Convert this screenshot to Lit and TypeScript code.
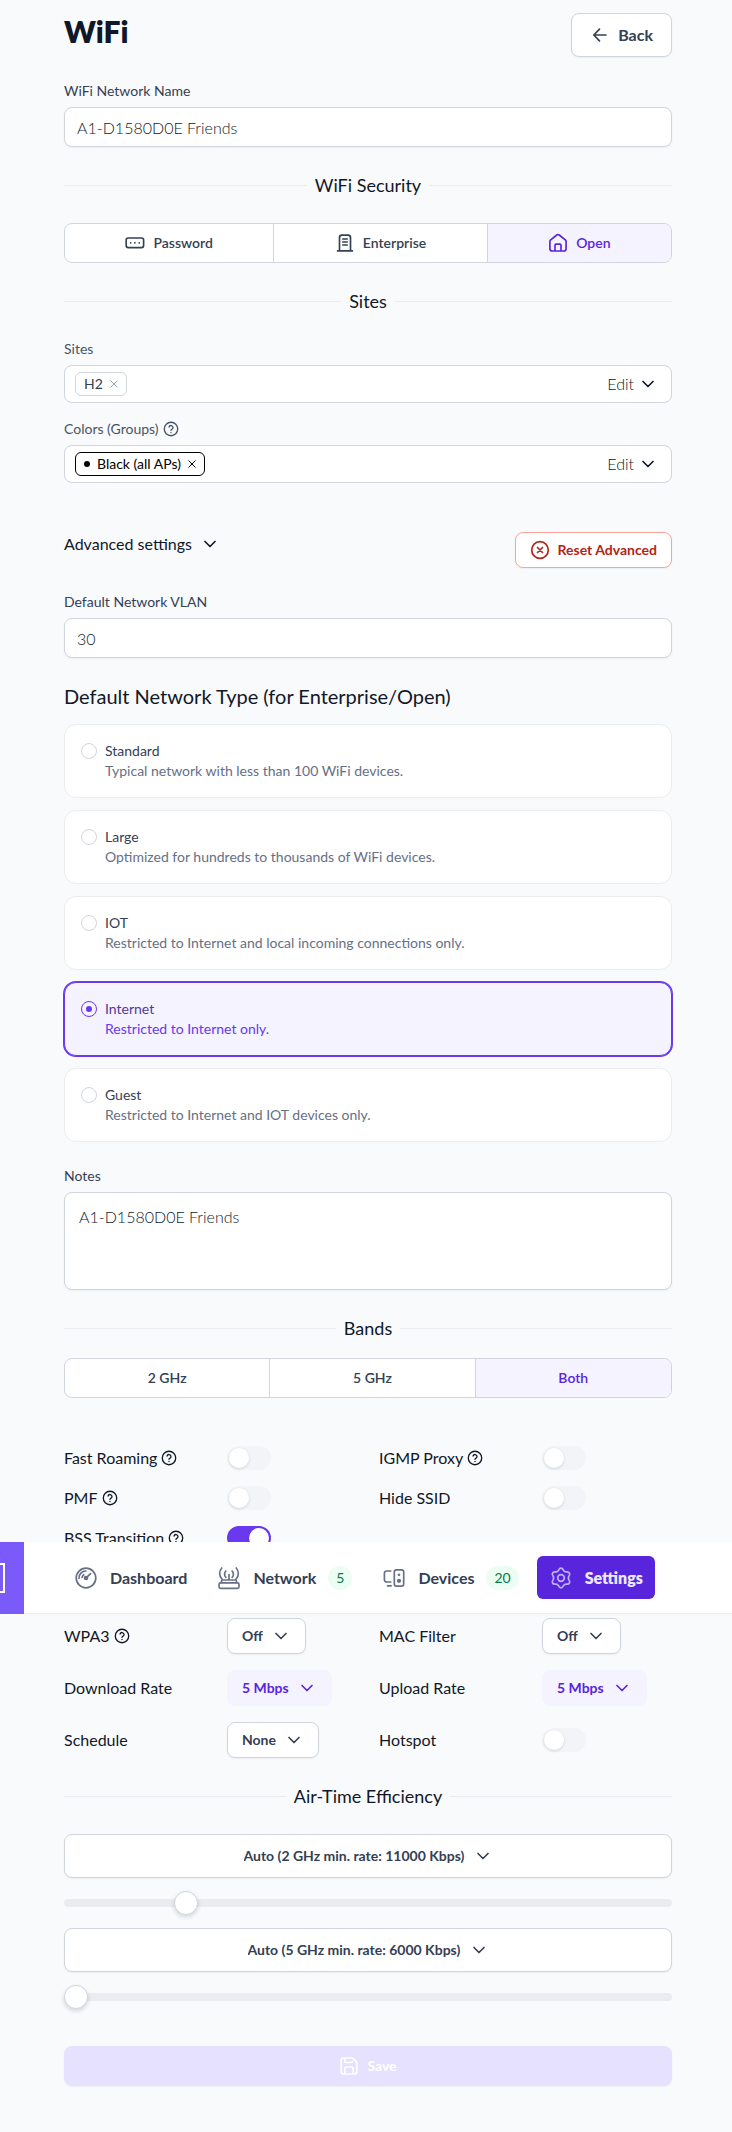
import { LitElement, html, css, svg, nothing } from "lit";
import type { TemplateResult, SVGTemplateResult } from "lit";
import { customElement, state } from "lit/decorators.js";
import { classMap } from "lit/directives/class-map.js";

type Icon = { box: string; art: SVGTemplateResult };

const icons: Record<string, Icon> = {
  back: { box: "0 0 20 20", art: svg`<path d="M16 10H4M9.5 4.2 3.8 10l5.700 5.800"/>` },
  chevron: { box: "0 0 20 20", art: svg`<path d="m5 7.5 5 5 5-5"/>` },
  help: {
    box: "0 0 20 20",
    art: svg`<circle cx="10" cy="10" r="8.4"/><path d="M7.6 7.5a2.5 2.5 0 0 1 4.9.8c0 1.7-2.5 2.2-2.5 3.4M10 14.3v.1"/>`,
  },
  close: { box: "0 0 8 8", art: svg`<path d="m.8.8 6.400 6.400m0-6.400-6.400 6.400"/>` },
  reset: { box: "0 0 20 20", art: svg`<circle cx="10" cy="10" r="8.3"/><path d="m7.5 7.5 5 5m0-5-5 5"/>` },
  password: {
    box: "0 0 20 20",
    art: svg`<rect x="1.2" y="5" width="17.4" height="9.6" rx="2"/><path d="M5.6 9.8h.1M9.9 9.8h.1M14.2 9.8h.1"/>`,
  },
  enterprise: {
    box: "0 0 20 20",
    art: svg`<path d="M4.5 17.6V4.6a2.4 2.4 0 0 1 2.4-2.4h6.2a2.4 2.4 0 0 1 2.4 2.4v13M2.6 17.9h14.8M7.8 6h4.4M7.8 9h4.4M7.8 12h4.4"/>`,
  },
  home: {
    box: "0 0 20 20",
    art: svg`<path d="M1.9 8.6c0-.7.3-1.2.8-1.7L8.8 2a1.9 1.9 0 0 1 2.4 0l6.1 4.9c.5.5.8 1 .8 1.7v7.1a2.3 2.3 0 0 1-2.3 2.3H4.2a2.3 2.3 0 0 1-2.3-2.3ZM7 17.8v-5.6c0-.6.4-1 1-1h4c.6 0 1 .4 1 1v5.6"/>`,
  },
  save: {
    box: "0 0 20 20",
    art: svg`<path d="M5.8 2v3.6c0 .5.4.9.9.9h5.6c.5 0 .9-.4.9-.9M14.2 18v-6c0-.6-.4-1-1-1H6.8c-.6 0-1 .4-1 1v6M17.8 7.2v8.3a2.5 2.5 0 0 1-2.5 2.5H4.7a2.5 2.5 0 0 1-2.5-2.5v-11A2.5 2.5 0 0 1 4.7 2h7.9c.7 0 1.3.3 1.8.8l2.6 2.600c.5.5.8 1.1.8 1.8Z"/>`,
  },
  dashboard: {
    box: "0 0 24 24",
    art: svg`<circle cx="12" cy="12" r="9.8"/><path d="M5 12.4A7 7 0 0 1 12 5M8 11.4a4.2 4.2 0 0 1 1.8-2.7M12.4 11.6 16.6 7.6"/><circle cx="12" cy="12" r="1.5" fill="currentColor"/>`,
  },
  network: {
    box: "0 0 24 24",
    art: svg`<rect x="2" y="16.8" width="20" height="5.6" rx="1.6"/><path d="M4.2 16.5 5 14h14l.8 2.5M12 14V8.5M8.8 11.3c-1.6-1.6-1.6-4.6 0-6.2M15.2 11.3c1.6-1.6 1.6-4.6 0-6.2M5 13.2C1.9 10.2 1.9 5 4.8 2M19 13.2c3.1-3 3.1-8.2.2-11.2"/>`,
  },
  devices: {
    box: "0 0 24 24",
    art: svg`<path d="M8.8 5H4.6A2.2 2.2 0 0 0 2.4 7.2v6.6A2.2 2.2 0 0 0 4.6 16h4.2M5.500 19.8h3.6"/><rect x="12.3" y="3.8" width="9.4" height="16.4" rx="2.2"/><circle cx="17" cy="8.8" r=".5" fill="currentColor"/><circle cx="17" cy="14.8" r="1.3" fill="currentColor"/>`,
  },
  settings: {
    box: "0 0 24 24",
    art: svg`<circle cx="12" cy="12" r="3.3"/><path d="M12 2.2c1.7 0 1.9 1.1 2.5 2.2.6 1 1.6 1.6 2.8 1.5 1.3 0 2.3-.4 3.1 1.1.9 1.5.1 2.2-.6 3.3-.6 1-.6 2.3 0 3.4.7 1.1 1.5 1.8.6 3.3-.8 1.5-1.8 1.1-3.1 1.1-1.2-.1-2.2.5-2.8 1.5-.6 1.1-.8 2.2-2.5 2.2s-1.9-1.1-2.5-2.2c-.6-1-1.6-1.6-2.8-1.5-1.3 0-2.3.4-3.1-1.1-.9-1.5-.1-2.2.6-3.3.6-1.1.6-2.4 0-3.4-.7-1.1-1.5-1.8-.6-3.3.8-1.5 1.8-1.1 3.1-1.1 1.2.1 2.2-.5 2.8-1.5.6-1.1.8-2.2 2.5-2.2Z"/>`,
  },
};

const icon = (name: string, size = "") => html`
  <svg class="icon ${size}" viewBox=${icons[name].box} aria-hidden="true">${icons[name].art}</svg>
`;

const networkTypes = [
  ["Standard", "Typical network with less than 100 WiFi devices."],
  ["Large", "Optimized for hundreds to thousands of WiFi devices."],
  ["IOT", "Restricted to Internet and local incoming connections only."],
  ["Internet", "Restricted to Internet only."],
  ["Guest", "Restricted to Internet and IOT devices only."],
];

@customElement("app-root")
export class AppRoot extends LitElement {
  @state() private security = "Open";
  @state() private band = "Both";
  @state() private networkType = "Internet";

  static styles = css`
    :host {
      display: block;
      min-height: 100vh;
      box-sizing: border-box;
      background: #f9fafc;
      color: #101828;
      font-family: Lato, "Open Sans", sans-serif;
      font-size: 14px;
      line-height: 20px;
      overflow-x: hidden;
    }
    *,
    *::before {
      box-sizing: border-box;
    }
    h1,
    h2,
    h3 {
      margin: 0;
      font-weight: 400;
    }
    button,
    input,
    textarea,
    select {
      margin: 0;
      font: inherit;
      color: inherit;
    }
    button,
    select {
      padding: 0;
      border: 0;
      background: none;
      cursor: pointer;
    }
    .icon {
      flex: none;
      width: 20px;
      height: 20px;
      fill: none;
      stroke: currentColor;
      stroke-width: 1.67;
      stroke-linecap: round;
      stroke-linejoin: round;
    }
    .icon.s8 {
      width: 8px;
      height: 8px;
      stroke-width: 1;
    }
    .icon.s16 {
      width: 16px;
      height: 16px;
    }
    .icon.s24 {
      width: 24px;
      height: 24px;
      color: #667085;
    }
    .section {
      display: flex;
      flex-direction: column;
      gap: 24px;
      padding: 0 60px 0 64px;
    }
    .top {
      padding-top: 13px;
    }
    .bottom {
      padding-bottom: 46px;
    }
    .row {
      display: flex;
      align-items: flex-start;
      justify-content: space-between;
    }
    .advanced {
      margin-top: 25px;
    }
    h1 {
      font-size: 30px;
      line-height: 36px;
      font-weight: 800;
    }
    h3 {
      font-size: 20px;
      line-height: 28px;
    }
    .types {
      display: flex;
      flex-direction: column;
      gap: 12px;
      margin: 0;
      padding: 0;
      border: 0;
      min-width: 0;
    }
    .types-block {
      display: flex;
      flex-direction: column;
      gap: 14px;
    }
    .button {
      display: flex;
      align-items: center;
      justify-content: center;
      gap: 8px;
      height: 36px;
      padding: 0 14px;
      border: 1px solid #d0d5dd;
      border-radius: 8px;
      background: #fff;
      color: #344054;
      font-weight: 700;
      box-shadow: 0 1px 2px rgba(16, 24, 40, 0.05);
    }
    .button.large {
      height: 44px;
      padding: 0 18px;
      font-size: 16px;
    }
    .button.wide {
      height: 44px;
    }
    .button.danger {
      border-color: #fda29b;
      color: #b42318;
    }
    .button.tinted {
      border-color: #f4f3ff;
      background: #f4f3ff;
      color: #5925dc;
      box-shadow: none;
    }
    .button.save {
      height: 40px;
      margin-top: 24px;
      border-color: #e5e1fe;
      background: #e5e1fe;
      color: #fff;
    }
    .button select {
      appearance: none;
      height: 100%;
    }
    .disclosure {
      display: flex;
      align-items: center;
      gap: 8px;
      font-size: 16px;
      line-height: 24px;
    }
    .field {
      display: flex;
      flex-direction: column;
      gap: 6px;
    }
    .field .label {
      display: flex;
      align-items: center;
      gap: 4px;
      height: 20px;
      color: #344054;
    }
    .pickers {
      display: flex;
      flex-direction: column;
      gap: 16px;
    }
    .pickers .label {
      color: #475467;
    }
    .text {
      width: 100%;
      height: 40px;
      padding: 0 12px;
      border: 1px solid #d0d5dd;
      border-radius: 8px;
      background: #fff;
      font-size: 16px;
      font-weight: 300;
      box-shadow: 0 1px 2px rgba(16, 24, 40, 0.05);
    }
    textarea.text {
      display: block;
      height: 98px;
      padding: 12px 14px;
      line-height: 24px;
      resize: none;
    }
    .picker {
      display: flex;
      align-items: center;
      justify-content: space-between;
      height: 38px;
      padding: 0 13px 0 10px;
      border: 1px solid #d0d5dd;
      border-radius: 8px;
      background: #fff;
    }
    .edit {
      display: flex;
      align-items: center;
      gap: 4px;
      font-size: 16px;
      font-weight: 300;
    }
    .tag {
      display: flex;
      align-items: center;
      gap: 7px;
      height: 24px;
      padding: 0 8px;
      border: 1px solid #d0d5dd;
      border-radius: 6px;
      color: #344054;
    }
    .tag button {
      display: flex;
      color: #98a2b3;
    }
    .tag.black,
    .tag.black button {
      border-color: #000;
      color: #000;
    }
    .dot {
      width: 6px;
      height: 6px;
      border-radius: 50%;
      background: #000;
    }
    .divider {
      display: flex;
      align-items: center;
      gap: 8px;
      font-size: 18px;
      line-height: 28px;
    }
    .divider::before,
    .divider::after {
      content: "";
      flex: 1;
      height: 1px;
      background: #eaecf0;
    }
    .segments {
      display: flex;
      height: 40px;
      border: 1px solid #d0d5dd;
      border-radius: 8px;
      background: #fff;
      overflow: hidden;
    }
    .segments button {
      display: flex;
      flex: 1 1 auto;
      align-items: center;
      justify-content: center;
      gap: 8px;
      color: #344054;
      font-weight: 600;
    }
    .segments button + button {
      border-left: 1px solid #d0d5dd;
    }
    .segments .on {
      background: #f4f3ff;
      color: #5925dc;
    }
    .bands {
      display: flex;
      flex-direction: column;
      gap: 16px;
    }
    .card {
      display: flex;
      gap: 8px;
      height: 74px;
      padding: 16px;
      border: 1px solid #eaecf0;
      border-radius: 12px;
      background: #fff;
      color: #344054;
      cursor: pointer;
    }
    .card p {
      margin: 0;
      color: #667085;
    }
    .card.on {
      border-color: #6938ef;
      background: #f4f3ff;
      color: #53389e;
      box-shadow: 0 0 0 1px #6938ef;
    }
    .card.on p {
      color: #6938ef;
    }
    .radio {
      appearance: none;
      display: grid;
      place-content: center;
      flex: none;
      width: 16px;
      height: 16px;
      margin-top: 2px;
      border: 1px solid #d0d5dd;
      border-radius: 50%;
      background: #fff;
    }
    .radio:checked {
      border-color: #6938ef;
      background: #f4f3ff;
    }
    .radio:checked::before {
      content: "";
      width: 6px;
      height: 6px;
      border-radius: 50%;
      background: #6938ef;
    }
    .options {
      display: grid;
      grid-template-columns: 1fr 1fr;
      gap: 16px 22px;
      font-size: 16px;
    }
    .toggles {
      margin-top: 24px;
    }
    .option {
      display: grid;
      grid-template-columns: 147px 1fr;
      align-items: center;
      justify-items: start;
      column-gap: 16px;
    }
    .option .name {
      display: flex;
      align-items: center;
      gap: 4px;
      line-height: 24px;
      white-space: nowrap;
    }
    .option .button {
      font-size: 14px;
    }
    .switch {
      appearance: none;
      width: 44px;
      height: 24px;
      padding: 2px;
      border-radius: 12px;
      background: #f2f4f7;
      cursor: pointer;
    }
    .switch::before {
      content: "";
      display: block;
      width: 20px;
      height: 20px;
      border-radius: 50%;
      background: #fff;
      box-shadow: 0 1px 3px rgba(16, 24, 40, 0.15);
    }
    .switch:checked {
      background: #6938ef;
    }
    .switch:checked::before {
      margin-left: 20px;
    }
    .nav {
      position: relative;
      z-index: 1;
      display: flex;
      align-items: center;
      gap: 38px;
      height: 72px;
      margin: -8px 0 4px;
      border-bottom: 1px solid #eaecf0;
      background: #fff;
    }
    .brand {
      width: 24px;
      height: 72px;
      align-self: flex-start;
      background: #7a5af8;
    }
    .brand svg {
      display: block;
      width: 24px;
      height: 72px;
    }
    .links {
      display: flex;
      gap: 6px;
    }
    .links a {
      display: flex;
      align-items: center;
      gap: 12px;
      height: 43px;
      padding: 0 12px;
      border-radius: 6px;
      color: #344054;
      font-size: 16px;
      font-weight: 700;
      text-decoration: none;
    }
    .links .on {
      background: #5925dc;
      color: #ebe9fe;
      font-weight: 800;
    }
    .links .on .icon {
      color: #bdb4fe;
    }
    .badge {
      height: 24px;
      padding: 0 8px;
      border-radius: 12px;
      background: #ecfdf3;
      color: #027a48;
      font-size: 14px;
      font-weight: 400;
      line-height: 24px;
    }
    .rates {
      display: flex;
      flex-direction: column;
      gap: 13px;
    }
    .range {
      appearance: none;
      display: block;
      width: 100%;
      height: 24px;
      background: none;
    }
    .range::-webkit-slider-runnable-track {
      height: 8px;
      border-radius: 4px;
      background: #eaecf0;
    }
    .range::-webkit-slider-thumb {
      appearance: none;
      width: 24px;
      height: 24px;
      margin-top: -8px;
      border: 1px solid #d0d5dd;
      border-radius: 50%;
      background: #fff;
      box-shadow: 0 2px 4px rgba(16, 24, 40, 0.16);
    }
  `;

  private divider(text: string) {
    return html`<h2 class="divider">${text}</h2>`;
  }

  private segments(label: string, items: string[][], active: string, pick: (v: string) => void) {
    return html`
      <div class="segments" role="group" aria-label=${label}>
        ${items.map(
          ([name, glyph]) => html`
            <button
              type="button"
              class=${classMap({ on: name === active })}
              aria-pressed=${name === active}
              @click=${() => pick(name)}
            >${glyph ? icon(glyph) : nothing}${name}</button>
          `
        )}
      </div>
    `;
  }

  private option(id: string, text: string, help: boolean, control: TemplateResult) {
    return html`
      <div class="option">
        <label class="name" for=${id}>${text}${help ? icon("help", "s16") : nothing}</label>
        ${control}
      </div>
    `;
  }

  private toggle(id: string, text: string, help = false, on = false) {
    return this.option(id, text, help, html`<input class="switch" type="checkbox" role="switch" id=${id} ?checked=${on} />`);
  }

  private choice(id: string, text: string, value: string, help = false, tinted = false) {
    return this.option(
      id,
      text,
      help,
      html`<span class=${classMap({ button: true, tinted })}>
        <select id=${id}><option>${value}</option></select>${icon("chevron")}
      </span>`
    );
  }

  private rate(text: string, label: string, min: number, value: number) {
    return html`
      <span class="button wide">
        <select aria-label=${label}><option>${text}</option></select>${icon("chevron")}
      </span>
      <input class="range" type="range" aria-label="${label} rate" min=${min} max="54000" .value=${String(value)} />
    `;
  }

  render() {
    return html`
      <main class="section top">
        <header class="row">
          <h1>WiFi</h1>
          <button type="button" class="button large">${icon("back")}Back</button>
        </header>

        <div class="field">
          <label class="label" for="ssid">WiFi Network Name</label>
          <input class="text" id="ssid" type="text" value="A1-D1580D0E Friends" />
        </div>

        ${this.divider("WiFi Security")}
        ${this.segments(
          "WiFi Security",
          [["Password", "password"], ["Enterprise", "enterprise"], ["Open", "home"]],
          this.security,
          (v) => (this.security = v)
        )}

        ${this.divider("Sites")}
        <div class="pickers">
          <div class="field">
            <span class="label">Sites</span>
            <div class="picker">
              <span class="tag">H2<button type="button" aria-label="Remove H2">${icon("close", "s8")}</button></span>
              <button type="button" class="edit">Edit${icon("chevron")}</button>
            </div>
          </div>
          <div class="field">
            <span class="label">Colors (Groups)${icon("help", "s16")}</span>
            <div class="picker">
              <span class="tag black">
                <span class="dot"></span>Black (all APs)<button type="button" aria-label="Remove Black">${icon("close", "s8")}</button>
              </span>
              <button type="button" class="edit">Edit${icon("chevron")}</button>
            </div>
          </div>
        </div>

        <div class="row advanced">
          <button type="button" class="disclosure" aria-expanded="true">Advanced settings${icon("chevron")}</button>
          <button type="button" class="button danger">${icon("reset")}Reset Advanced</button>
        </div>

        <div class="field">
          <label class="label" for="vlan">Default Network VLAN</label>
          <input class="text" id="vlan" type="text" inputmode="numeric" value="30" />
        </div>

        <div class="types-block">
          <h3 id="types">Default Network Type (for Enterprise/Open)</h3>
          <fieldset class="types" aria-labelledby="types">
            ${networkTypes.map(
              ([name, about]) => html`
                <label class=${classMap({ card: true, on: name === this.networkType })}>
                  <input
                    class="radio"
                    type="radio"
                    name="network-type"
                    .checked=${name === this.networkType}
                    @change=${() => (this.networkType = name)}
                  />
                  <div>${name}<p>${about}</p></div>
                </label>
              `
            )}
          </fieldset>
        </div>

        <div class="field">
          <label class="label" for="notes">Notes</label>
          <textarea class="text" id="notes" .value=${"A1-D1580D0E Friends"}></textarea>
        </div>

        <div class="bands">
          ${this.divider("Bands")}
          ${this.segments("Bands", [["2 GHz"], ["5 GHz"], ["Both"]], this.band, (v) => (this.band = v))}
        </div>

        <div class="options toggles">
          ${this.toggle("roaming", "Fast Roaming", true)}
          ${this.toggle("igmp", "IGMP Proxy", true)}
          ${this.toggle("pmf", "PMF", true)}
          ${this.toggle("hide", "Hide SSID")}
          ${this.toggle("bss", "BSS Transition", true, true)}
        </div>
      </main>

      <nav class="nav" aria-label="Main">
        <div class="brand">
          <svg viewBox="0 0 24 72" aria-hidden="true">
            <rect x="-20" y="22" width="24" height="28" fill="none" stroke="#fff" stroke-width="2" />
          </svg>
        </div>
        <div class="links">
          <a href="#dashboard">${icon("dashboard", "s24")}Dashboard</a>
          <a href="#network">${icon("network", "s24")}Network<span class="badge">5</span></a>
          <a href="#devices">${icon("devices", "s24")}Devices<span class="badge">20</span></a>
          <a href="#settings" class="on" aria-current="page">${icon("settings", "s24")}Settings</a>
        </div>
      </nav>

      <section class="section bottom">
        <div class="options">
          ${this.choice("wpa3", "WPA3", "Off", true)}
          ${this.choice("mac", "MAC Filter", "Off")}
          ${this.choice("down", "Download Rate", "5 Mbps", false, true)}
          ${this.choice("up", "Upload Rate", "5 Mbps", false, true)}
          ${this.choice("schedule", "Schedule", "None")}
          ${this.toggle("hotspot", "Hotspot")}
        </div>

        ${this.divider("Air-Time Efficiency")}
        <div class="rates">
          ${this.rate("Auto (2 GHz min. rate: 11000 Kbps)", "2 GHz minimum", 1000, 11000)}
          ${this.rate("Auto (5 GHz min. rate: 6000 Kbps)", "5 GHz minimum", 6000, 6000)}
          <button type="submit" class="button save" disabled>${icon("save")}Save</button>
        </div>
      </section>
    `;
  }
}
